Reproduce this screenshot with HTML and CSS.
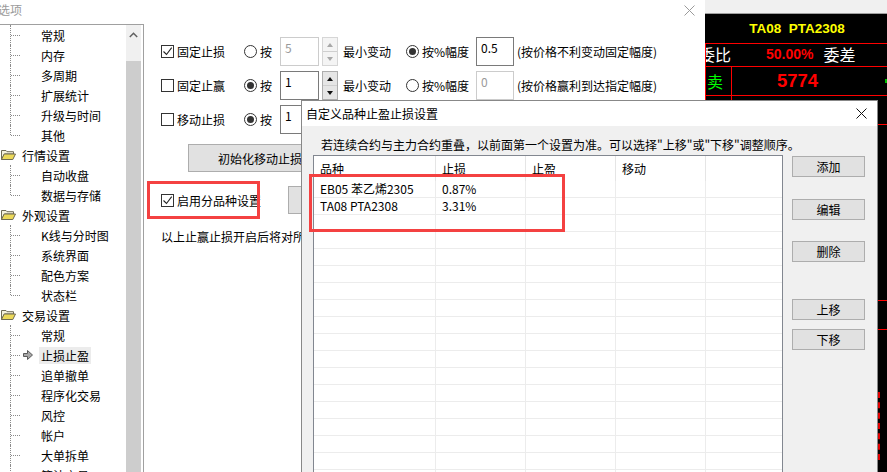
FILE: index.html
```html
<!DOCTYPE html>
<html lang="zh-CN">
<head>
<meta charset="utf-8">
<title>选项</title>
<link rel="stylesheet" href="styles.css">
</head>
<body>
<div class="desktop">
  <section class="options-win">
    <header class="win-title">
      <span class="win-title-text">选项</span>
      <svg class="x-icon" width="11" height="11" viewBox="0 0 11 11"><path d="M0.5 0.5l10 10M10.5 0.5l-10 10" stroke="#9a9a9a" stroke-width="1" fill="none"/></svg>
    </header>
    <div class="win-body">
      <nav class="tree-panel">
        <div class="tree">
          <ul class="children">
            <li><span class="t">常规</span></li>
            <li><span class="t">内存</span></li>
            <li><span class="t">多周期</span></li>
            <li><span class="t">扩展统计</span></li>
            <li><span class="t">升级与时间</span></li>
            <li><span class="t">其他</span></li>
          </ul>
          <div class="group">
            <svg class="folder" width="15" height="12" viewBox="0 0 15 12"><path d="M0.5 1.5h4.5l1 1.2h6.5v2.3H3.5L0.5 10.5z" fill="#f4f1dc" stroke="#6e6a55"/><path d="M0.5 10.5l2.7-5.5h11.3l-2.7 5.5z" fill="#ecd959" stroke="#6e6a55"/></svg>
            <span>行情设置</span>
          </div>
          <ul class="children">
            <li><span class="t">自动收盘</span></li>
            <li><span class="t">数据与存储</span></li>
          </ul>
          <div class="group">
            <svg class="folder" width="15" height="12" viewBox="0 0 15 12"><path d="M0.5 1.5h4.5l1 1.2h6.5v2.3H3.5L0.5 10.5z" fill="#f4f1dc" stroke="#6e6a55"/><path d="M0.5 10.5l2.7-5.5h11.3l-2.7 5.5z" fill="#ecd959" stroke="#6e6a55"/></svg>
            <span>外观设置</span>
          </div>
          <ul class="children">
            <li><span class="t">K线与分时图</span></li>
            <li><span class="t">系统界面</span></li>
            <li><span class="t">配色方案</span></li>
            <li><span class="t">状态栏</span></li>
          </ul>
          <div class="group">
            <svg class="folder" width="15" height="12" viewBox="0 0 15 12"><path d="M0.5 1.5h4.5l1 1.2h6.5v2.3H3.5L0.5 10.5z" fill="#f4f1dc" stroke="#6e6a55"/><path d="M0.5 10.5l2.7-5.5h11.3l-2.7 5.5z" fill="#ecd959" stroke="#6e6a55"/></svg>
            <span>交易设置</span>
          </div>
          <ul class="children">
            <li><span class="t">常规</span></li>
            <li class="sel"><svg class="sel-arrow" width="10" height="10" viewBox="0 0 10 10"><path d="M0.5 3.5h4v-3l5 4.5-5 4.5v-3h-4z" fill="#a8a8a8" stroke="#5a5a5a" stroke-width="1"/></svg><span class="t">止损止盈</span></li>
            <li><span class="t">追单撤单</span></li>
            <li><span class="t">程序化交易</span></li>
            <li><span class="t">风控</span></li>
            <li><span class="t">帐户</span></li>
            <li><span class="t">大单拆单</span></li>
            <li><span class="t">算法交易</span></li>
          </ul>
        </div>
        <div class="vscroll">
          <div class="vs-up"><svg width="9" height="6" viewBox="0 0 9 6"><path d="M0.8 5L4.5 1.3 8.2 5" fill="none" stroke="#606060" stroke-width="1.5"/></svg></div>
          <div class="vs-thumb"></div>
        </div>
      </nav>

      <main class="settings">
        <div class="stop-rows">
          <div class="stop-row">
            <label class="chk"><span class="cb"><svg width="11" height="11" viewBox="0 0 11 11"><path d="M1.5 5.5l3 3 5.2-6.8" fill="none" stroke="#222" stroke-width="1.1"/></svg></span>固定止损</label>
            <label class="rad rad-by"><span class="rb"></span>按</label>
            <span class="num dis">5</span>
            <span class="spin dis"><span class="up"></span><span class="dn"></span></span>
            <span class="min-lbl">最小变动</span>
            <label class="rad rad-pct"><span class="rb on"></span>按%幅度</label>
            <span class="num pct">0.5</span>
            <span class="hint">(按价格不利变动固定幅度)</span>
          </div>
          <div class="stop-row">
            <label class="chk"><span class="cb"></span>固定止赢</label>
            <label class="rad rad-by"><span class="rb on"></span>按</label>
            <span class="num">1</span>
            <span class="spin"><span class="up"></span><span class="dn"></span></span>
            <span class="min-lbl">最小变动</span>
            <label class="rad rad-pct"><span class="rb"></span>按%幅度</label>
            <span class="num pct dis">0</span>
            <span class="hint">(按价格赢利到达指定幅度)</span>
          </div>
          <div class="stop-row">
            <label class="chk"><span class="cb"></span>移动止损</label>
            <label class="rad rad-by"><span class="rb on"></span>按</label>
            <span class="num">1</span>
            <span class="spin"><span class="up"></span><span class="dn"></span></span>
          </div>
        </div>
        <button class="init-btn">初始化移动止损</button>
        <div class="split-row">
          <label class="chk chk-wide"><span class="cb"><svg width="11" height="11" viewBox="0 0 11 11"><path d="M1.5 5.5l3 3 5.2-6.8" fill="none" stroke="#222" stroke-width="1.1"/></svg></span>启用分品种设置</label>
          <button class="small-btn" aria-label="设置"></button>
        </div>
        <p class="note">以上止赢止损开启后将对所有合约生效</p>
      </main>
    </div>
  </section>

  <aside class="quote">
    <div class="q-top"></div>
    <div class="q-title">TA08  PTA2308</div>
    <div class="q-ratio"><span class="q-lbl">委比</span><span class="q-pct">50.00%</span><span class="q-lbl q-diff">委差</span></div>
    <div class="q-line"><span class="q-side sell">卖</span><span class="q-price">5774</span><span class="q-tick"></span></div>
    <div class="q-line"><span class="q-side buy">买</span><span class="q-price">5773</span></div>
    <div class="q-gap1"></div>
    <div class="q-gap2"></div>
    <div class="q-dash"></div>
  </aside>

  <div class="dialog">
    <div class="dlg-title">
      <span>自定义品种止盈止损设置</span>
      <svg width="11" height="11" viewBox="0 0 11 11"><path d="M0.5 0.5l10 10M10.5 0.5l-10 10" stroke="#111" stroke-width="1" fill="none"/></svg>
    </div>
    <div class="dlg-body">
      <p class="dlg-desc">若连续合约与主力合约重叠，以前面第一个设置为准。可以选择"上移"或"下移"调整顺序。</p>
      <div class="dlg-main">
        <div class="list">
          <div class="list-head"><span class="c1">品种</span><span class="c2">止损</span><span class="c3">止盈</span><span class="c4">移动</span><span class="c5"></span></div>
          <div class="list-row"><span class="c1">EB05 苯乙烯2305</span><span class="c2">0.87%</span><span class="c3"></span><span class="c4"></span><span class="c5"></span></div>
          <div class="list-row"><span class="c1">TA08 PTA2308</span><span class="c2">3.31%</span><span class="c3"></span><span class="c4"></span><span class="c5"></span></div>
          <div class="list-row"><span class="c1"></span><span class="c2"></span><span class="c3"></span><span class="c4"></span><span class="c5"></span></div>
          <div class="list-row"><span class="c1"></span><span class="c2"></span><span class="c3"></span><span class="c4"></span><span class="c5"></span></div>
          <div class="list-row"><span class="c1"></span><span class="c2"></span><span class="c3"></span><span class="c4"></span><span class="c5"></span></div>
          <div class="list-row"><span class="c1"></span><span class="c2"></span><span class="c3"></span><span class="c4"></span><span class="c5"></span></div>
          <div class="list-row"><span class="c1"></span><span class="c2"></span><span class="c3"></span><span class="c4"></span><span class="c5"></span></div>
          <div class="list-row"><span class="c1"></span><span class="c2"></span><span class="c3"></span><span class="c4"></span><span class="c5"></span></div>
          <div class="list-row"><span class="c1"></span><span class="c2"></span><span class="c3"></span><span class="c4"></span><span class="c5"></span></div>
          <div class="list-row"><span class="c1"></span><span class="c2"></span><span class="c3"></span><span class="c4"></span><span class="c5"></span></div>
          <div class="list-row"><span class="c1"></span><span class="c2"></span><span class="c3"></span><span class="c4"></span><span class="c5"></span></div>
          <div class="list-row"><span class="c1"></span><span class="c2"></span><span class="c3"></span><span class="c4"></span><span class="c5"></span></div>
          <div class="list-row"><span class="c1"></span><span class="c2"></span><span class="c3"></span><span class="c4"></span><span class="c5"></span></div>
          <div class="list-row"><span class="c1"></span><span class="c2"></span><span class="c3"></span><span class="c4"></span><span class="c5"></span></div>
          <div class="list-row"><span class="c1"></span><span class="c2"></span><span class="c3"></span><span class="c4"></span><span class="c5"></span></div>
          <div class="list-row"><span class="c1"></span><span class="c2"></span><span class="c3"></span><span class="c4"></span><span class="c5"></span></div>
          <div class="list-row"><span class="c1"></span><span class="c2"></span><span class="c3"></span><span class="c4"></span><span class="c5"></span></div>
          <div class="list-row"><span class="c1"></span><span class="c2"></span><span class="c3"></span><span class="c4"></span><span class="c5"></span></div>
        </div>
        <div class="dlg-btns">
          <button class="dlg-btn">添加</button>
          <button class="dlg-btn b-edit">编辑</button>
          <button class="dlg-btn b-del">删除</button>
          <button class="dlg-btn b-up">上移</button>
          <button class="dlg-btn b-down">下移</button>
        </div>
      </div>
    </div>
  </div>

  <div class="mark mark-a"></div>
  <div class="mark mark-b"></div>
</div>
</body>
</html>
```
FILE: styles.css
```css
* { box-sizing: border-box; }
html, body { margin: 0; padding: 0; }
body {
  width: 887px;
  height: 472px;
  overflow: hidden;
  background: #fff;
  font-family: "Noto Sans CJK SC", "Microsoft YaHei", sans-serif;
  font-size: 12px;
  color: #000;
}
.desktop {
  position: relative;
  display: flex;
  width: 887px;
  height: 472px;
  overflow: hidden;
}

/* ---------- options window ---------- */
.options-win {
  flex: 0 0 705px;
  height: 472px;
  background: #fff;
  display: flex;
  flex-direction: column;
}
.win-title {
  flex: 0 0 24px;
  display: flex;
  justify-content: space-between;
  align-items: flex-start;
  padding: 2px 10px 0 0;
}
.win-title-text { color: #9a9a9a; line-height: 16px; margin-left: -2px; }
.win-title .x-icon { margin-top: 3px; }
.win-body { flex: 1; display: flex; min-height: 0; }

.tree-panel {
  flex: 0 0 144px;
  display: flex;
  border-top: 1px solid #a0a0a0;
  border-right: 1px solid #a0a0a0;
  overflow: hidden;
}
.tree { flex: 0 0 126px; width: 126px; overflow: hidden; }
.tree ul { list-style: none; margin: 0; padding: 0; }
.tree li {
  position: relative;
  height: 20px;
  display: flex;
  align-items: center;
  padding-left: 39px;
  white-space: nowrap;
}
.tree li::before {
  content: "";
  position: absolute;
  left: 10px;
  top: 0;
  bottom: 0;
  border-left: 1px dotted #8a8a8a;
}
.tree li:last-child::before { bottom: 10px; }
.tree li::after {
  content: "";
  position: absolute;
  left: 11px;
  top: 10px;
  width: 9px;
  border-top: 1px dotted #8a8a8a;
}
.tree .t { padding: 0 2px; line-height: 17px; }
.tree li.sel { padding-left: 23px; }
.tree li.sel .sel-arrow { margin-right: 6px; }
.tree li.sel .t { background: #ececec; }
.group {
  height: 20px;
  display: flex;
  align-items: center;
  padding-left: 1px;
  white-space: nowrap;
}
.group .folder { margin-right: 6px; }

.vscroll {
  flex: 0 0 15px;
  margin-right: 2px;
  display: flex;
  flex-direction: column;
  background: #f0f0f0;
}
.vs-up { height: 20px; display: flex; align-items: center; justify-content: center; }
.vs-thumb { margin-top: 16px; flex: 1; background: #cdcdcd; }

.settings { flex: 1; padding: 13px 0 0 17px; white-space: nowrap; }
.stop-rows { display: flex; flex-direction: column; gap: 5px; }
.stop-row { display: flex; align-items: center; height: 29px; }
.chk { display: flex; align-items: center; gap: 3px; width: 83px; }
.chk-wide { width: 127px; }
.cb {
  width: 13px;
  height: 13px;
  border: 1px solid #333;
  background: #fff;
  display: flex;
  align-items: center;
  justify-content: center;
}
.rad { display: flex; align-items: center; gap: 3px; }
.rad-by { width: 36px; }
.rad-pct { width: 70px; }
.rb {
  width: 13px;
  height: 13px;
  border: 1px solid #333;
  border-radius: 50%;
  background: #fff;
  display: flex;
  align-items: center;
  justify-content: center;
}
.rb.on::after {
  content: "";
  width: 7px;
  height: 7px;
  border-radius: 50%;
  background: #333;
}
.num {
  width: 39px;
  height: 29px;
  border: 1px solid #7a7a7a;
  background: #fff;
  padding: 3px 4px;
  line-height: 14px;
}
.num.pct { width: 38px; }
.num.dis { border-color: #cccccc; color: #9a9a9a; }
.spin {
  width: 16px;
  height: 29px;
  margin-left: 3px;
  display: flex;
  flex-direction: column;
  border: 1px solid #adadad;
  background: #e5e5e5;
}
.spin span { flex: 1; display: flex; align-items: center; justify-content: center; }
.spin .up { border-bottom: 1px solid #cfcfcf; }
.spin .up::after {
  content: "";
  border-left: 3px solid transparent;
  border-right: 3px solid transparent;
  border-bottom: 4px solid #111;
}
.spin .dn::after {
  content: "";
  border-left: 3px solid transparent;
  border-right: 3px solid transparent;
  border-top: 4px solid #111;
}
.spin.dis { border-color: #d6d6d6; background: #f4f4f4; }
.spin.dis .up::after { border-bottom-color: #a8a8a8; }
.spin.dis .dn::after { border-top-color: #a8a8a8; }
.min-lbl { margin-left: 5px; width: 63px; }
.hint { margin-left: 3px; }

.init-btn {
  display: block;
  margin: 10px 0 0 27px;
  width: 150px;
  height: 28px;
  border: 1px solid #adadad;
  background: #e1e1e1;
  padding: 0 0 0 29px;
  text-align: left;
  font: inherit;
  color: #000;
}
.split-row { display: flex; align-items: center; height: 28px; margin-top: 14px; }
.small-btn {
  width: 70px;
  height: 28px;
  border: 1px solid #adadad;
  background: #e1e1e1;
  font: inherit;
  color: #000;
  padding: 0;
}
.note { margin: 16px 0 0; line-height: 14px; }

/* ---------- quote panel ---------- */
.quote {
  flex: 0 0 182px;
  height: 472px;
  background: #000;
  display: flex;
  flex-direction: column;
  overflow: hidden;
  color: #fff;
}
.q-top { flex: 0 0 14px; background: #f0f0f0; border-bottom: 1px solid #a0a0a0; }
.q-title {
  flex: 0 0 30px;
  border-bottom: 1px solid #f00;
  display: flex;
  align-items: center;
  justify-content: center;
  color: #ffff00;
  font: bold 13.5px "Liberation Sans", Arial, sans-serif;
  white-space: pre;
  padding-left: 2px;
}
.q-ratio {
  flex: 0 0 23px;
  display: flex;
  align-items: center;
  border-left: 1px solid #f00;
  border-bottom: 1px solid #f00;
  overflow: hidden;
  white-space: nowrap;
  padding-bottom: 3px;
}
.q-lbl { font-size: 16px; line-height: 18px; margin-left: -7px; color: #fff; }
.q-pct { margin-left: 35px; color: #f00; font: bold 14px "Liberation Sans", Arial, sans-serif; }
.q-lbl.q-diff { margin-left: 10px; }
.q-line {
  flex: 0 0 29px;
  display: flex;
  align-items: stretch;
  border-left: 1px solid #f00;
  border-bottom: 1px solid #f00;
}
.q-side {
  flex: 0 0 26px;
  border-right: 1px solid #f00;
  font-size: 16px;
  display: flex;
  align-items: center;
  padding-left: 1px;
}
.q-side.sell { color: #00ff00; }
.q-side.buy { color: #ff0000; }
.q-price {
  padding-left: 45px;
  display: flex;
  align-items: center;
  color: #f00;
  font: bold 18.5px "Liberation Sans", Arial, sans-serif;
}
.q-tick { margin-left: auto; align-self: center; width: 2px; height: 4px; background: #00c000; }
.q-gap1 { flex: 0 0 176px; border-bottom: 1px solid #f00; }
.q-gap2 { flex: 0 0 29px; border-bottom: 1px solid #f00; }
.q-dash { flex: 0 0 68px; margin: 62px 0 0 173px; border-left: 2px dashed #e00000; }

/* ---------- dialog ---------- */
.dialog {
  position: absolute;
  left: 301px;
  top: 100px;
  width: 577px;
  height: 380px;
  border: 1px solid #888;
  background: #f0f0f0;
  display: flex;
  flex-direction: column;
}
.dlg-title {
  flex: 0 0 25px;
  background: #fff;
  display: flex;
  align-items: center;
  justify-content: space-between;
  padding: 0 10px 0 4px;
}
.dlg-body { flex: 1; padding: 12px 0 0 11px; }
.dlg-desc { margin: 0 0 3px 8px; line-height: 14px; white-space: nowrap; }
.dlg-main { display: flex; align-items: flex-start; }
.list {
  width: 470px;
  height: 330px;
  border: 1px solid #828790;
  border-bottom: 0;
  background: #fff;
  overflow: hidden;
}
.list-head { display: flex; height: 25px; }
.list-head span {
  border-right: 1px solid #e5e5e5;
  padding-left: 6px;
  line-height: 25px;
}
.list-row { display: flex; height: 17px; border-bottom: 1px solid #ececec; }
.list-row span {
  border-right: 1px solid #ececec;
  padding-left: 6px;
  line-height: 16px;
  white-space: nowrap;
}
.c1 { flex: 0 0 122px; }
.c2, .c3, .c4 { flex: 0 0 90px; }
.list-head .c5, .list-row .c5 { flex: 1; border-right: 0; }
.dlg-btns { display: flex; flex-direction: column; margin-left: 9px; padding-top: 1px; }
.dlg-btn {
  width: 73px;
  height: 21px;
  border: 1px solid #adadad;
  background: #e1e1e1;
  font: inherit;
  color: #000;
  padding: 0;
}
.b-edit { margin-top: 22px; }
.b-del { margin-top: 21px; }
.b-up { margin-top: 37px; }
.b-down { margin-top: 9px; }

/* ---------- annotation marks ---------- */
.mark { position: absolute; border: 3px solid #f44141; pointer-events: none; }
.mark-a { left: 147px; top: 181px; width: 113px; height: 38px; }
.mark-b { left: 309px; top: 174px; width: 256px; height: 58px; }
```
